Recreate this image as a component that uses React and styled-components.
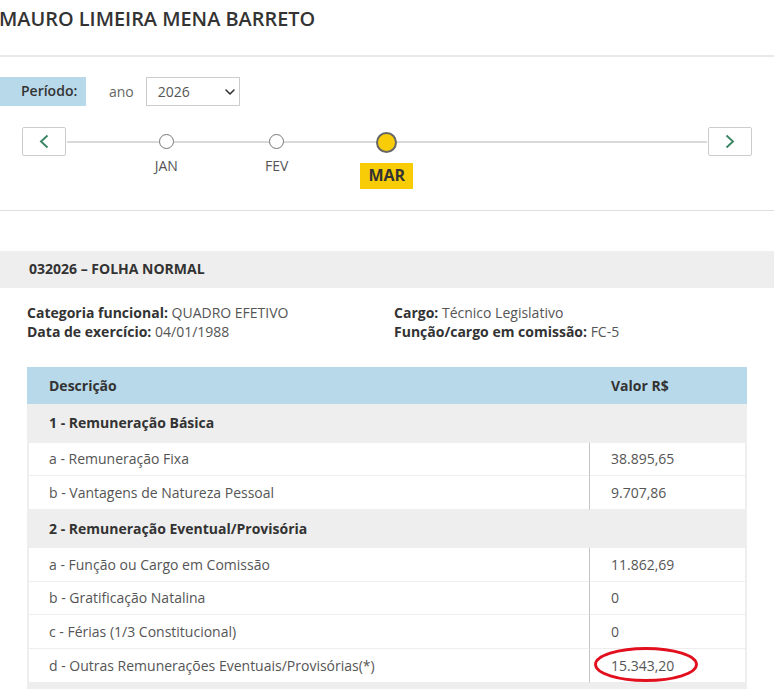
import styled, { createGlobalStyle } from 'styled-components'
import { ChevronDown } from 'lucide-react'

const GlobalStyle = createGlobalStyle`
  html, body {
    margin: 0;
    padding: 0;
    background: #fff;
    overflow: hidden;
  }
  body {
    font-family: "Open Sans", "Liberation Sans", sans-serif;
    font-size: 14px;
    color: #555;
  }
`

const rows = [
  { group: true, label: '1 - Remuneração Básica', height: 39 },
  { label: 'a - Remuneração Fixa', value: '38.895,65', height: 33 },
  { label: 'b - Vantagens de Natureza Pessoal', value: '9.707,86', height: 34 },
  { group: true, label: '2 - Remuneração Eventual/Provisória', height: 38 },
  { label: 'a - Função ou Cargo em Comissão', value: '11.862,69', height: 34 },
  { label: 'b - Gratificação Natalina', value: '0', height: 33 },
  { label: 'c - Férias (1/3 Constitucional)', value: '0', height: 34 },
  { label: 'd - Outras Remunerações Eventuais/Provisórias(*)', value: '15.343,20', height: 34, marked: true },
]

function Arrow({ d }) {
  return (
    <svg width="10" height="15" viewBox="0 0 10 15" fill="none" stroke="currentColor" strokeWidth="1.9" aria-hidden="true">
      <path d={d} />
    </svg>
  )
}

function App() {
  return (
    <Page>
      <GlobalStyle />
      <Title>MAURO LIMEIRA MENA BARRETO</Title>
      <Rule />
      <PeriodBar>
        <PeriodLabel>Período:</PeriodLabel>
        <YearLabel>ano</YearLabel>
        <YearSelect>
          2026
          <ChevronDown size={16} strokeWidth={2.4} color="#333" />
        </YearSelect>
      </PeriodBar>
      <Timeline>
        <NavButton aria-label="Anterior"><Arrow d="M8.5 1.5 L2 7.5 L8.5 13.5" /></NavButton>
        <Track>
          <Month><Dot /><MonthName>JAN</MonthName></Month>
          <Month><Dot /><MonthName>FEV</MonthName></Month>
          <Month><Dot $active /><MonthName $active>MAR</MonthName></Month>
        </Track>
        <NavButton aria-label="Próximo"><Arrow d="M1.5 1.5 L8 7.5 L1.5 13.5" /></NavButton>
      </Timeline>
      <Rule $low />
      <Band>032026 – FOLHA NORMAL</Band>
      <Info>
        <div>
          <InfoLine><b>Categoria funcional:</b> QUADRO EFETIVO</InfoLine>
          <InfoLine><b>Data de exercício:</b> 04/01/1988</InfoLine>
        </div>
        <div>
          <InfoLine><b>Cargo:</b> Técnico Legislativo</InfoLine>
          <InfoLine><b>Função/cargo em comissão:</b> FC-5</InfoLine>
        </div>
      </Info>
      <Table>
        <colgroup>
          <col style={{ width: 563 }} />
          <col />
        </colgroup>
        <thead>
          <tr>
            <HeadCell $first>Descrição</HeadCell>
            <HeadCell>Valor R$</HeadCell>
          </tr>
        </thead>
        <tbody>
          {rows.map((row) => row.group ? (
            <tr key={row.label} style={{ height: row.height }}>
              <GroupCell colSpan={2}>{row.label}</GroupCell>
            </tr>
          ) : (
            <tr key={row.label} style={{ height: row.height }}>
              <LabelCell>{row.label}</LabelCell>
              <ValueCell>
                {row.value}
                {row.marked && (
                  <Circle viewBox="0 0 104 38" aria-hidden="true">
                    <ellipse cx="52" cy="17.5" rx="50.5" ry="16" fill="none" stroke="#e2101e" strokeWidth="2.8" />
                  </Circle>
                )}
              </ValueCell>
            </tr>
          ))}
          <tr style={{ height: 20 }}>
            <GroupCell colSpan={2} />
          </tr>
        </tbody>
      </Table>
    </Page>
  )
}

const Page = styled('div')`
  width: 774px;
  height: 689px;
  overflow: hidden;
`

const Title = styled('h1')`
  margin: 0 0 0 -1px;
  height: 55px;
  padding-top: 6px;
  box-sizing: border-box;
  font-size: 19.9px;
  line-height: 26px;
  font-weight: 600;
  color: #333;
  white-space: nowrap;
`

const Rule = styled('div')`
  height: ${(p) => (p.$low ? 1 : 2)}px;
  background: ${(p) => (p.$low ? '#dedede' : '#e8e8e8')};
`

const PeriodBar = styled('div')`
  display: flex;
  align-items: center;
  height: 29px;
  margin-top: 20px;
`

const PeriodLabel = styled('div')`
  width: 86px;
  height: 29px;
  box-sizing: border-box;
  padding-left: 21px;
  line-height: 28px;
  background: #b8d9ea;
  color: #333;
  font-weight: 600;
`

const YearLabel = styled('span')`
  margin-left: 23px;
  color: #666;
`

const YearSelect = styled('div')`
  display: flex;
  align-items: center;
  justify-content: space-between;
  width: 94px;
  height: 29px;
  margin-left: 12px;
  padding: 0 1px 0 11px;
  box-sizing: border-box;
  border: 1px solid #ccc;
  color: #555;
`

const Timeline = styled('div')`
  display: flex;
  align-items: flex-start;
  width: 730px;
  margin: 21px 0 0 22px;
  height: 83px;
`

const NavButton = styled('button')`
  display: flex;
  align-items: center;
  justify-content: center;
  flex: none;
  width: 44px;
  height: 29px;
  padding: 0;
  background: #fff;
  border: 1px solid #ccc;
  border-radius: 2px;
  color: #3a8564;
`

const Track = styled('div')`
  position: relative;
  display: flex;
  flex: 1;
  padding-left: 45px;

  &::before {
    content: '';
    position: absolute;
    left: 1px;
    right: 1px;
    top: 14px;
    height: 2px;
    background: #d9d9d9;
  }
`

const Month = styled('div')`
  position: relative;
  display: flex;
  flex-direction: column;
  align-items: center;
  width: 110.5px;
`

const Dot = styled('span')`
  box-sizing: border-box;
  width: ${(p) => (p.$active ? 21 : 15)}px;
  height: ${(p) => (p.$active ? 21 : 15)}px;
  margin-top: ${(p) => (p.$active ? 5 : 7)}px;
  margin-left: ${(p) => (p.$active ? '-1px' : '0')};
  border-radius: 50%;
  border: ${(p) => (p.$active ? '2px solid #666' : '1px solid #777')};
  background: ${(p) => (p.$active ? '#f8cc06' : '#fff')};
`

const MonthName = styled('span')`
  margin-top: ${(p) => (p.$active ? '10px' : '7px')};
  margin-left: ${(p) => (p.$active ? '-1px' : '0')};
  padding: ${(p) => (p.$active ? '0 8px' : '0')};
  height: ${(p) => (p.$active ? '26px' : 'auto')};
  line-height: ${(p) => (p.$active ? '25px' : '20px')};
  font-size: ${(p) => (p.$active ? '16px' : '14px')};
  font-weight: ${(p) => (p.$active ? 700 : 400)};
  background: ${(p) => (p.$active ? '#f8cc06' : 'transparent')};
  color: ${(p) => (p.$active ? '#333' : '#555')};
`

const Band = styled('div')`
  height: 37px;
  margin-top: 40px;
  padding-left: 29px;
  line-height: 35px;
  background: #eee;
  color: #333;
  font-weight: 700;
`

const Info = styled('div')`
  display: grid;
  grid-template-columns: 367px 1fr;
  padding: 15px 0 0 27px;
  height: 64px;
`

const InfoLine = styled('div')`
  line-height: 19px;
  white-space: nowrap;

  b {
    font-weight: 700;
    color: #333;
  }
`

const Table = styled('table')`
  width: 720px;
  margin-left: 27px;
  border-collapse: separate;
  border-spacing: 0;
  table-layout: fixed;
`

const HeadCell = styled('th')`
  height: 37px;
  box-sizing: border-box;
  padding: 0 0 1px ${(p) => (p.$first ? 22 : 21)}px;
  background: #b8d9ea;
  color: #333;
  font-weight: 700;
  text-align: left;
`

const GroupCell = styled('td')`
  padding: 0 0 2px 22px;
  background: #eee;
  color: #333;
  font-weight: 700;
`

const LabelCell = styled('td')`
  padding: 0 0 1px 20px;
  border-left: 2px solid #eee;
  border-bottom: 1px solid #eee;
  border-right: 1px solid #c4c4c4;
`

const ValueCell = styled('td')`
  position: relative;
  padding: 0 0 1px 21px;
  border-right: 2px solid #eee;
  border-bottom: 1px solid #eee;
`

const Circle = styled('svg')`
  position: absolute;
  left: 4px;
  top: -2px;
  width: 104px;
  height: 38px;
  overflow: visible;
`

export default App
